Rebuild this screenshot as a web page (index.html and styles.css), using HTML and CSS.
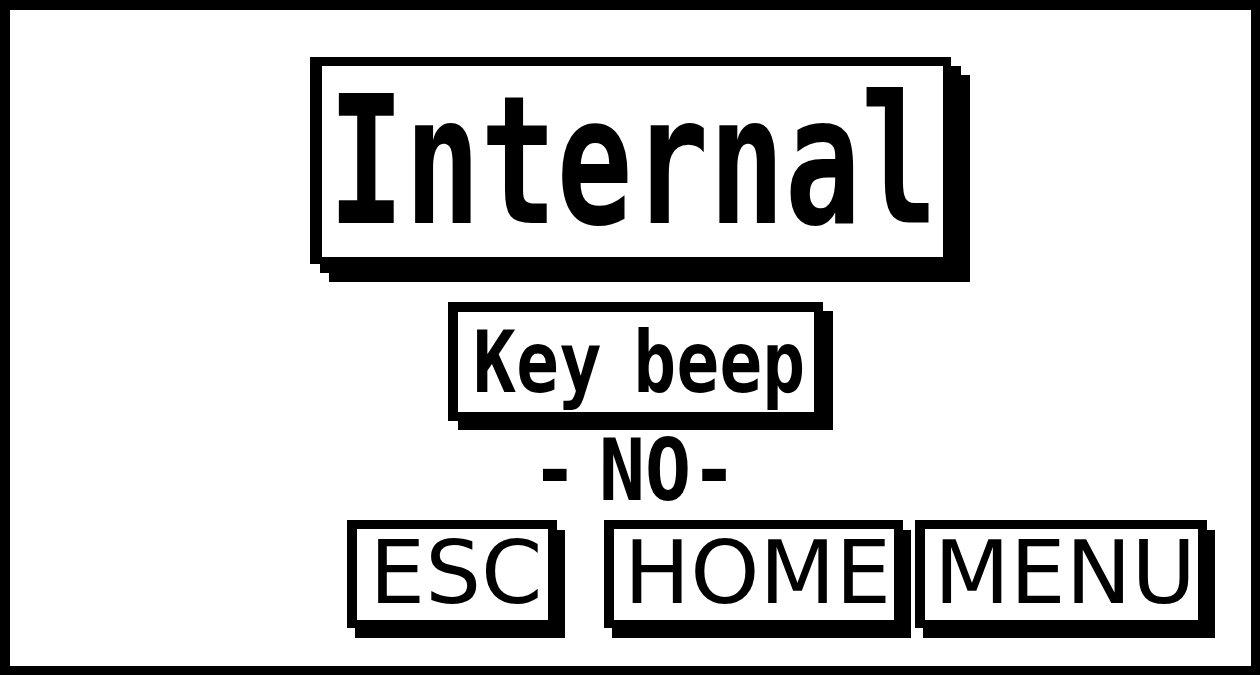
FILE: index.html
```html
<!DOCTYPE html>
<html lang="en">
<head>
    <meta charset="UTF-8">
    <meta name="viewport" content="width=device-width, initial-scale=1.0">
    <title>Settings - Key beep</title>
    <link rel="stylesheet" href="styles.css">
</head>
<body>
    <div class="lcd">
        <!-- Menu title -->
        <div class="title-box">
            <span class="title-text">Internal</span>
        </div>

        <!-- Selected setting and its value -->
        <div class="item-box">
            <span class="item-text">Key beep</span>
        </div>
        <div class="value">- NO-</div>

        <!-- Soft keys -->
        <div class="softkeys">
            <div class="key key-esc">ESC</div>
            <div class="key key-home">HOME</div>
            <div class="key key-menu">MENU</div>
        </div>
    </div>
</body>
</html>
```

FILE: styles.css
```css
* {
    box-sizing: border-box;
}

body {
    margin: 0;
    background: #fff;
}

.lcd {
    width: 1260px;
    height: 675px;
    border: solid #000;
    border-width: 10px 9px 9px 10px;
    background: #fff;
    color: #000;
    display: flex;
    flex-direction: column;
    align-items: center;
    font-family: "DejaVu Sans Mono", monospace;
    overflow: hidden;
}

.title-box {
    width: 641px;
    height: 207px;
    margin-top: 47px;
    border: solid #000;
    border-width: 9px 8px 7px 12px;
    box-shadow: 10px 9px 0 #000, 19px 18px 0 #000; /* stepped drop shadow */
    display: flex;
    justify-content: center;
    align-items: center;
}

.title-text {
    display: inline-block;
    font-size: 178px;
    font-weight: bold;
    line-height: 1;
    white-space: nowrap;
    transform: scaleX(0.71);
}

.item-box {
    width: 375px;
    height: 119px;
    margin-top: 38px;
    margin-left: 9px;
    padding-left: 7px;
    border: solid #000;
    border-width: 10px 9px 9px 10px;
    box-shadow: 10px 9px 0 #000;
    display: flex;
    justify-content: center;
    align-items: center;
}

.item-text {
    display: inline-block;
    font-size: 86px;
    font-weight: bold;
    line-height: 1;
    word-spacing: -14px;
    white-space: nowrap;
    transform: scaleX(0.83);
}

.value {
    height: 86px;
    margin-top: 6px;
    margin-left: 8px;
    font-size: 86px;
    font-weight: bold;
    line-height: 86px;
    word-spacing: -28px;
    white-space: nowrap;
    transform: scaleX(0.89);
}

.softkeys {
    align-self: stretch;
    display: flex;
    margin-top: 7px;
    padding-left: 337px;
}

.key {
    height: 108px;
    padding: 0 0 3px 7px;
    border: solid #000;
    border-width: 9px 9px 8px 10px;
    box-shadow: 8px 10px 0 #000;
    display: flex;
    justify-content: center;
    align-items: center;
    font-family: "DejaVu Sans", sans-serif;
    font-size: 88px;
    line-height: 1;
    white-space: nowrap;
}

.key-esc {
    width: 210px;
    margin-right: 47px;
}

.key-home {
    width: 299px;
    margin-right: 12px;
}

.key-menu {
    width: 292px;
}
```
